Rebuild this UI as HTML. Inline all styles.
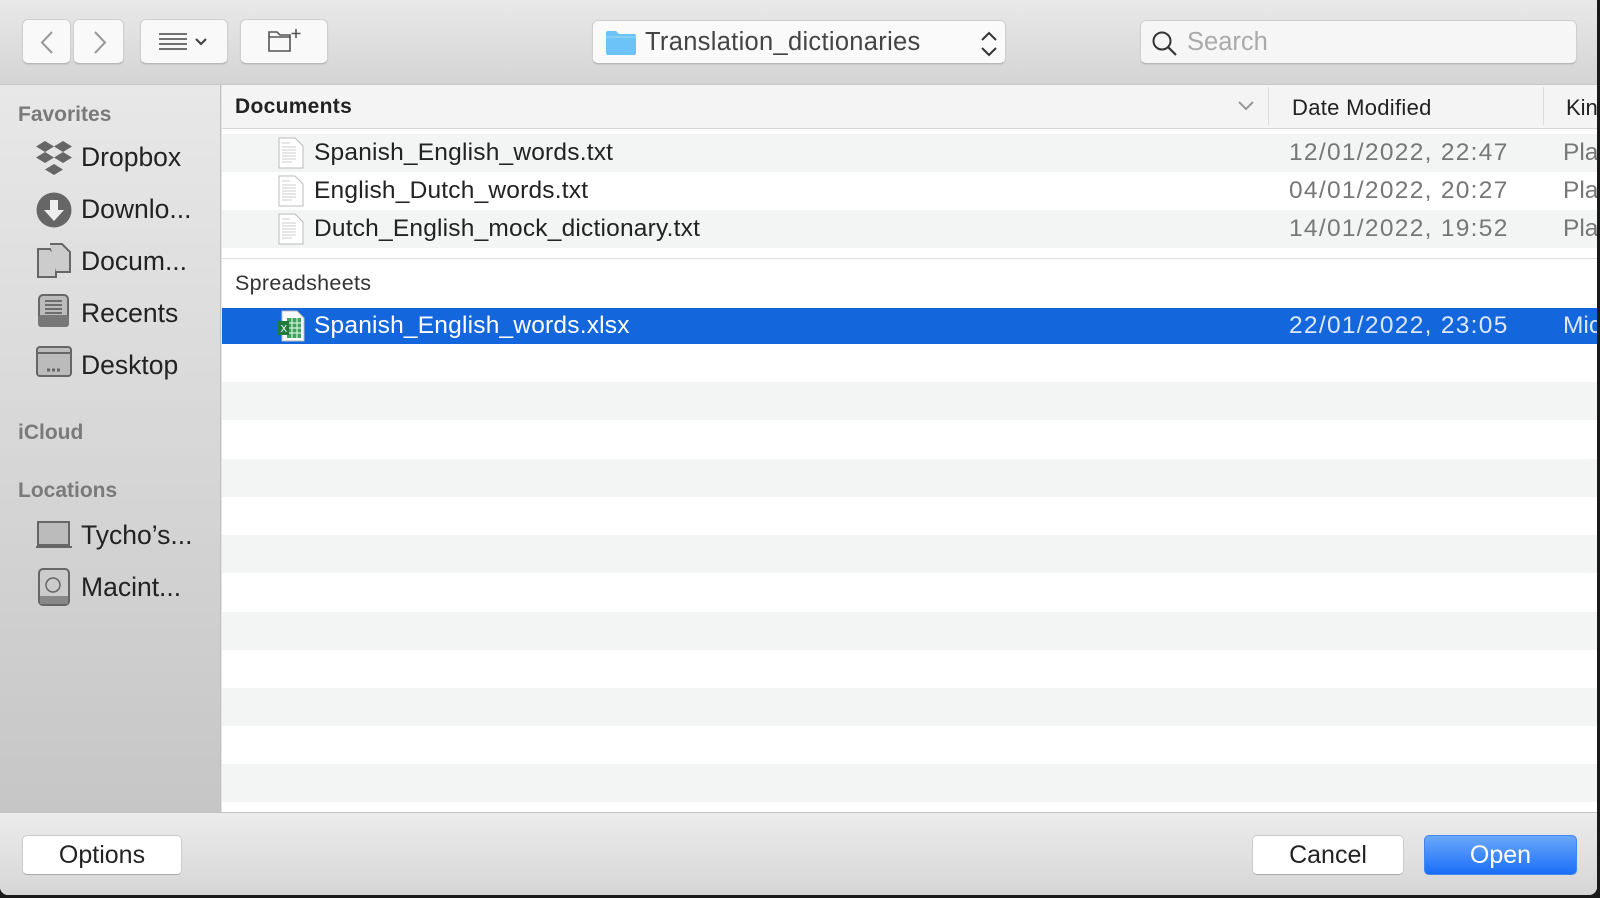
<!DOCTYPE html>
<html><head><style>
*{margin:0;padding:0;box-sizing:border-box}
body{width:1600px;height:898px;overflow:hidden;background:#1a1a1a;font-family:"Liberation Sans",sans-serif;position:relative}
#win{position:absolute;left:0;top:0;width:1597px;height:895px;background:#e4e4e4;border-radius:0 0 8px 8px;overflow:hidden}
.tb{position:absolute;left:0;top:0;width:100%;height:85px;background:linear-gradient(#e9e9e9,#d4d4d4);border-bottom:1px solid #c8c8c8}
.btn{position:absolute;background:#f9f9f9;border:1px solid #cfcfcf;border-bottom-color:#b8b8b8;border-radius:6px;box-shadow:0 1px 1px rgba(0,0,0,.08)}
.side{position:absolute;left:0;top:85px;width:221px;height:727px;background:linear-gradient(#e8e8e8,#c6c6c6);border-right:1px solid #c0c0c0}
.sh{position:absolute;left:18px;font-size:21px;color:#7a7a7a;font-weight:bold}
.si{position:absolute;left:81px;font-size:26.5px;color:#222}
.ic{position:absolute;left:36px}
.main{position:absolute;left:222px;top:85px;width:1375px;height:727px;background:#fff}
.hdr{position:absolute;left:0;top:0;width:100%;height:44px;background:#f4f4f4;border-bottom:1px solid #d6d6d6;font-size:21px;color:#222}
.row{position:absolute;left:0;width:100%;height:38px}
.g{background:#f3f4f4}
.fn{position:absolute;left:92px;font-size:24.5px;color:#222;top:5px;letter-spacing:.2px}
.dt{position:absolute;left:1067px;font-size:24.5px;color:#777;top:5px;letter-spacing:1.3px}
.kd{position:absolute;left:1341px;font-size:24.5px;color:#777;top:5px}
.fi{position:absolute;left:56px;top:3px}
.foot{position:absolute;left:0;top:812px;width:100%;height:83px;background:linear-gradient(#ececec,#d6d6d6);border-top:1px solid #c4c4c4}
.fb{position:absolute;top:22px;height:40px;background:#fff;border:1px solid #ccc;border-bottom-color:#aaa;border-radius:5px;font-size:25px;color:#222;text-align:center;line-height:38px}
</style></head><body>
<div id="win">
<div class="tb">
 <div class="btn" style="left:22px;top:19px;width:49px;height:45px"><svg width="49" height="45"><path d="M29 12 L19 22.5 L29 33" fill="none" stroke="#999" stroke-width="2"/></svg></div>
 <div class="btn" style="left:73px;top:19px;width:51px;height:45px"><svg width="51" height="45"><path d="M21 12 L31 22.5 L21 33" fill="none" stroke="#999" stroke-width="2"/></svg></div>
 <div class="btn" style="left:140px;top:19px;width:88px;height:45px"><svg width="88" height="45"><path d="M18 14h28M18 19h28M18 24h28M18 29h28" stroke="#444" stroke-width="1.6"/><path d="M55 19l5 5 5-5" fill="none" stroke="#444" stroke-width="2.2"/></svg></div>
 <div class="btn" style="left:240px;top:19px;width:88px;height:45px"><svg width="88" height="45"><path d="M28 12h8l3 3h10v16h-21z M28 17h21" fill="none" stroke="#555" stroke-width="1.6"/><path d="M55 9v9M50.5 13.5h9" stroke="#555" stroke-width="1.6"/></svg></div>
 <div class="btn" style="left:592px;top:20px;width:414px;height:44px;background:#fafafa"><svg style="position:absolute;left:12px;top:8px" width="32" height="28"><path d="M1 4q0-2 2-2h8l3 3h15q2 0 2 2v17q0 2-2 2H3q-2 0-2-2z" fill="#6cc3f5"/><path d="M1 8h30" stroke="#9fd8fa" stroke-width="1"/></svg><span style="position:absolute;left:52px;top:7px;font-size:25.5px;color:#444;letter-spacing:.3px">Translation_dictionaries</span><svg style="position:absolute;left:386px;top:9px" width="20" height="28"><path d="M3 10l7-7 7 7M3 18l7 7 7-7" fill="none" stroke="#333" stroke-width="2"/></svg></div>
 <div class="btn" style="left:1140px;top:20px;width:437px;height:44px;background:#f6f6f6"><svg style="position:absolute;left:10px;top:9px" width="28" height="28"><circle cx="11" cy="11" r="8.5" fill="none" stroke="#333" stroke-width="2"/><path d="M17 17l8 8" stroke="#333" stroke-width="2.2"/></svg><span style="position:absolute;left:46px;top:7px;font-size:25.5px;color:#aaa">Search</span></div>
</div>
<div class="side">
 <div class="sh" style="top:18px">Favorites</div>
 <svg class="ic" style="top:56px" width="36" height="34"><g fill="#666"><path d="M9 0l9 5.5-9 5.5-9-5.5z"/><path d="M27 0l9 5.5-9 5.5-9-5.5z"/><path d="M9 11l9 5.5-9 5.5-9-5.5z"/><path d="M27 11l9 5.5-9 5.5-9-5.5z"/><path d="M18 23l9 5.5-9 5.5-9-5.5z"/></g></svg>
 <div class="si" style="top:57px">Dropbox</div>
 <svg class="ic" style="top:107px" width="36" height="36"><circle cx="18" cy="18" r="17.5" fill="#666"/><path d="M14 8h8v10h6L18 29 8 18h6z" fill="#eee"/></svg>
 <div class="si" style="top:109px">Downlo...</div>
 <svg class="ic" style="top:158px" width="36" height="36"><path d="M2 6h12l6 6v22H2z" fill="#ccc" stroke="#666" stroke-width="2"/><path d="M14 1h12l8 8v20H20" fill="#ccc" stroke="#666" stroke-width="2"/></svg>
 <div class="si" style="top:161px">Docum...</div>
 <svg class="ic" style="top:209px" width="36" height="34"><rect x="3" y="1" width="29" height="30" rx="4" fill="#bbb" stroke="#666" stroke-width="2"/><path d="M9 7h17M9 11h17M9 15h17M9 19h17" stroke="#555" stroke-width="1.5"/><rect x="2" y="21" width="31" height="12" rx="3" fill="#777"/></svg>
 <div class="si" style="top:213px">Recents</div>
 <svg class="ic" style="top:261px" width="36" height="32"><rect x="1" y="1" width="34" height="29" rx="3" fill="#bbb" stroke="#666" stroke-width="2"/><path d="M1 7h34" stroke="#666" stroke-width="2"/><path d="M11 24h3M16 24h3M21 24h3" stroke="#666" stroke-width="3"/></svg>
 <div class="si" style="top:265px">Desktop</div>
 <div class="sh" style="top:336px">iCloud</div>
 <div class="sh" style="top:394px">Locations</div>
 <svg class="ic" style="top:436px" width="36" height="28"><rect x="2" y="1" width="31" height="23" fill="#bbb" stroke="#666" stroke-width="2"/><path d="M0 26h36" stroke="#666" stroke-width="2"/></svg>
 <div class="si" style="top:435px">Tycho’s...</div>
 <svg class="ic" style="top:483px" width="36" height="38"><rect x="3" y="1" width="30" height="36" rx="4" fill="#ccc" stroke="#666" stroke-width="2"/><circle cx="17" cy="17" r="7" fill="none" stroke="#666" stroke-width="1.5"/><rect x="4" y="28" width="28" height="8" fill="#888"/></svg>
 <div class="si" style="top:487px">Macint...</div>
</div>
<div class="main">
 <div class="hdr"><span style="position:absolute;left:13px;top:10px;font-weight:bold;letter-spacing:.3px">Documents</span>
  <svg style="position:absolute;left:1015px;top:14px" width="18" height="14"><path d="M2 3l7 7 7-7" fill="none" stroke="#999" stroke-width="2"/></svg>
  <div style="position:absolute;left:1046px;top:2px;width:1px;height:38px;background:#ddd"></div>
  <span style="position:absolute;left:1070px;top:10px;font-size:22px;letter-spacing:.3px">Date Modified</span>
  <div style="position:absolute;left:1321px;top:2px;width:1px;height:38px;background:#ddd"></div>
  <span style="position:absolute;left:1344px;top:10px;font-size:22px">Kin</span></div>
 <div class="row g" style="top:49px"><svg class="fi" width="26" height="32"><path d="M1 1h16l8 8v22H1z" fill="#fff" stroke="#bbb"/><path d="M4 6h8M4 10h14M4 13h14M4 16h14M4 19h14M4 22h14M4 25h10" stroke="#ccc"/></svg><span class="fn">Spanish_English_words.txt</span><span class="dt">12/01/2022, 22:47</span><span class="kd">Pla</span></div>
 <div class="row" style="top:87px"><svg class="fi" width="26" height="32"><path d="M1 1h16l8 8v22H1z" fill="#fff" stroke="#bbb"/><path d="M4 6h8M4 10h14M4 13h14M4 16h14M4 19h14M4 22h14M4 25h10" stroke="#ccc"/></svg><span class="fn">English_Dutch_words.txt</span><span class="dt">04/01/2022, 20:27</span><span class="kd">Pla</span></div>
 <div class="row g" style="top:125px"><svg class="fi" width="26" height="32"><path d="M1 1h16l8 8v22H1z" fill="#fff" stroke="#bbb"/><path d="M4 6h8M4 10h14M4 13h14M4 16h14M4 19h14M4 22h14M4 25h10" stroke="#ccc"/></svg><span class="fn">Dutch_English_mock_dictionary.txt</span><span class="dt">14/01/2022, 19:52</span><span class="kd">Pla</span></div>
 <div style="position:absolute;left:0;top:173px;width:100%;height:1px;background:#ddd"></div>
 <span style="position:absolute;left:13px;top:186px;font-size:21.5px;color:#333;letter-spacing:.3px">Spreadsheets</span>
 <div class="row" style="top:223px;height:36px;background:#1366dc"><svg class="fi" style="top:2px" width="28" height="32"><path d="M4 1h15l7 7v23H4z" fill="#fff" stroke="#bbb"/><rect x="9" y="8" width="14" height="20" fill="#3fa35a"/><path d="M9 13h14M9 18h14M9 23h14M14 8v20M19 8v20" stroke="#d8f0dc" stroke-width="1.2"/><rect x="0" y="11" width="11" height="14" fill="#1f7a3e"/><text x="2.5" y="22" font-size="10" fill="#fff" font-family="Liberation Sans">X</text></svg><span class="fn" style="color:#fff;top:4px">Spanish_English_words.xlsx</span><span class="dt" style="color:#dbe7fb;top:4px">22/01/2022, 23:05</span><span class="kd" style="color:#dbe7fb;top:4px">Mic</span></div>
 <div class="row g" style="top:297px"></div>
 <div class="row g" style="top:374px"></div>
 <div class="row g" style="top:450px"></div>
 <div class="row g" style="top:527px"></div>
 <div class="row g" style="top:603px"></div>
 <div class="row g" style="top:679px"></div>
</div>
<div class="foot">
 <div class="fb" style="left:22px;width:160px">Options</div>
 <div class="fb" style="left:1252px;width:152px">Cancel</div>
 <div class="fb" style="left:1424px;width:153px;background:linear-gradient(#6aa8fb,#1a6ef8);border-color:#3f86f0;color:#fff">Open</div>
</div>
</div>
</body></html>
